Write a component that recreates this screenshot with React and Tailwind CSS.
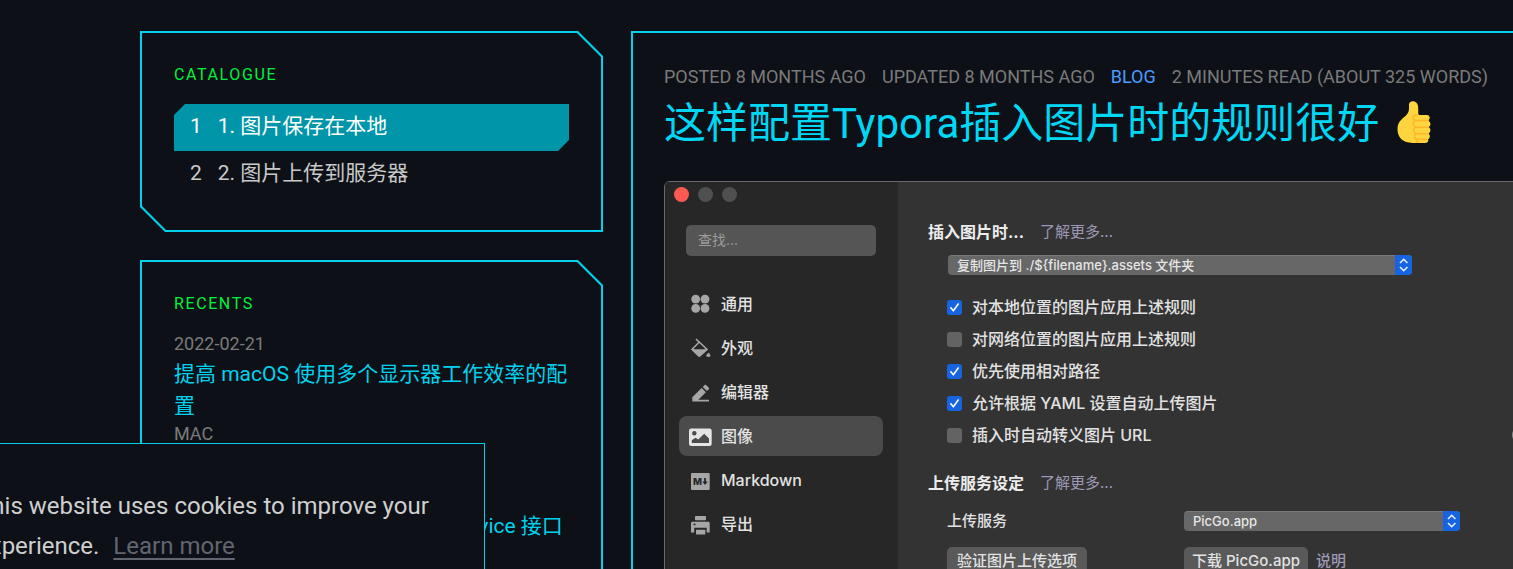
import React from "react";

const SITE_FONT = "font-[Roboto,'Noto_Sans_CJK_SC',sans-serif]";
const APP_FONT = "font-[Inter,'Noto_Sans_CJK_SC',sans-serif]";

function CutCard({ children, className = "" }) {
  return (
    <section
      className={
        "bg-[#00d2ee] p-[2px] [clip-path:polygon(0_0,calc(100%-25px)_0,100%_25px,100%_100%,25px_100%,0_calc(100%-25px))] " +
        className
      }
    >
      <div className="h-full bg-[#0d1117] p-8 [clip-path:polygon(0_0,calc(100%-24px)_0,100%_24px,100%_100%,24px_100%,0_calc(100%-24px))]">
        {children}
      </div>
    </section>
  );
}

function CardLabel({ children }) {
  return (
    <h3 className="text-base leading-5 tracking-widest text-[#00f03c] uppercase">{children}</h3>
  );
}

function Catalogue() {
  return (
    <CutCard>
      <CardLabel>Catalogue</CardLabel>
      <ul className="mt-[19px] text-[21px] leading-8">
        <li>
          <a
            href="#local"
            className="flex h-[47px] gap-4 bg-[#0095a8] px-4 pt-[6px] text-white [clip-path:polygon(11px_0,100%_0,100%_calc(100%-11px),calc(100%-11px)_100%,0_100%,0_11px)]"
          >
            <span>1</span>
            <span>1. 图片保存在本地</span>
          </a>
        </li>
        <li>
          <a href="#server" className="flex h-[47px] gap-4 px-4 pt-[6px] text-[#c9c9c9]">
            <span>2</span>
            <span>2. 图片上传到服务器</span>
          </a>
        </li>
      </ul>
    </CutCard>
  );
}

function RecentPost({ date, category, children }) {
  return (
    <article>
      <p className="text-lg leading-7 text-[#7a7a7a]">{date}</p>
      <h4 className="text-[21px] leading-8 text-[#00d2ee]">
        <a href="#post">{children}</a>
      </h4>
      <p className="text-lg leading-6 text-[#7a7a7a] uppercase">{category}</p>
    </article>
  );
}

function Recents() {
  return (
    <CutCard className="h-[460px]">
      <CardLabel>Recents</CardLabel>
      <div className="mt-4 flex flex-col gap-1">
        <RecentPost date="2022-02-21" category="Mac">
          提高 macOS 使用多个显示器工作效率的配置
        </RecentPost>
        <RecentPost date="2022-02-18" category="Java">
          <span className="block">使用 Spring Boot</span>
          <span className="block whitespace-nowrap">快速开发并且调用 SOAP WebService 接口</span>
        </RecentPost>
      </div>
    </CutCard>
  );
}

function ThumbsUp() {
  return (
    <svg viewBox="0 0 34 42" className="mt-[10px] h-[42px] w-[34px]" role="img" aria-label="thumbs up">
      <path
        fill="#ffd53e"
        d="M12 3.5C12 1.5 13.6.2 15.8.2c3 0 5.4 2.400 5.400 6.300V14H30c3 0 3.600 4 1.200 5.400 2.800 1.600 3 5.200.6 6.600 2.200 1.700 2.200 5.200-.2 6.400 2 1.800 1.400 5-.5 5.900.7 2-.5 3.600-3.100 3.600H15.500C6 41.900.5 36.500.5 28.300c0-7 3.600-9.700 7.100-12.600 2.800-2.300 4.400-4.900 4.400-8z"
      />
      <g fill="none" stroke="#ffb52e" strokeWidth="1.500" strokeLinecap="round">
        <path d="M21.200 13.800c-3.800.2-6 1-5.200 3.600.3 1 1 1.700 2 2-2.600 1.500-2.500 5.500.4 6.700-2.300 1.400-2.200 5.300.6 6.400-2.200 1.500-1.900 5 .6 5.800-.8 1.600 0 2.600 1.600 3" />
        <path d="M18 19.500h13M18.400 26.300h13M19 32.700h12M20 38.400h10" />
      </g>
    </svg>
  );
}

const ICONS = {
  general: (
    <g fill="#a6a6a6">
      <circle cx="7.700" cy="7.200" r="4.400" />
      <circle cx="17" cy="7.200" r="4.400" />
      <circle cx="7.700" cy="16.400" r="4.400" />
      <circle cx="17" cy="16.400" r="4.400" />
    </g>
  ),
  appearance: (
    <g>
      <path d="M8 3l3.500 3.500M11.300 6L4.200 13.200l7.100 6.700 7.500-6.700z" fill="none" stroke="#a6a6a6" strokeWidth="1.600" />
      <path d="M3 13.200h17.300l-8 7.200c-.6.500-1.400.5-2 0z" fill="#a6a6a6" />
      <path d="M20.600 16.500c1 1.400 1.900 2.200 1.900 3.100 0 .8-.6 1.300-1.900 1.300-1.800 0-2.400-.5-2.400-1.300s1.300-1.700 2.400-3.100z" fill="#a6a6a6" />
    </g>
  ),
  editor: (
    <path
      fill="#a6a6a6"
      d="M4.300 21.500v-4.300l9.300-9.300 4.300 4.300-7.500 7.500H21v1.800zM14.700 6.900l1.700-1.700c.6-.6 1.300-.6 1.900 0l2.300 2.300c.6.600.6 1.300 0 1.900L19 11z"
    />
  ),
  image: (
    <g>
      <rect x="1" y="4.500" width="22.700" height="17.500" rx="2.200" fill="#e4e4e4" />
      <circle cx="6.300" cy="9.200" r="2.200" fill="#4b4b4b" />
      <path d="M3.800 19v-2.700l3.800-2.500 2.600 1.600 6-5.600 4.800 4.700V19z" fill="#4b4b4b" />
    </g>
  ),
  markdown: (
    <g>
      <rect x="3" y="5" width="18.700" height="17" rx="1" fill="#a6a6a6" />
      <text x="5" y="17" fontSize="9.500" fontWeight="800" fill="#272727" fontFamily="Inter">M</text>
      <path d="M17 10v4.500" stroke="#272727" strokeWidth="1.800" />
      <path d="M14.300 13.500h5.400L17 17z" fill="#272727" />
    </g>
  ),
  export: (
    <g fill="#a6a6a6">
      <rect x="7" y="4" width="11" height="4.200" rx=".8" />
      <path d="M4.500 9.700h15.700c.9 0 1.500.6 1.500 1.500v9.300h-3v-4.700H6.200v4.700H3v-9.300c0-.9.600-1.500 1.500-1.500z" />
      <rect x="8" y="17.700" width="9.300" height="4.800" rx=".5" />
      <rect x="5.500" y="11.700" width="2" height="1.500" fill="#272727" />
    </g>
  ),
};

const NAV = [
  ["general", "通用"],
  ["appearance", "外观"],
  ["editor", "编辑器"],
  ["image", "图像"],
  ["markdown", "Markdown"],
  ["export", "导出"],
];

function PrefsSidebar() {
  return (
    <aside className="w-[233px] shrink-0 bg-[#272727] pt-[5px] pr-[15px] pl-[14px]">
      <div className="-ml-[5px] flex gap-[9px]">
        <button aria-label="close" className="size-[15px] rounded-full bg-[#ff5a52]" />
        <button aria-label="minimise" className="size-[15px] rounded-full bg-[#505050]" />
        <button aria-label="zoom" className="size-[15px] rounded-full bg-[#505050]" />
      </div>
      <div className="mt-[23px] px-[7px]">
        <input
          aria-label="查找"
          placeholder="查找..."
          className="block h-[31px] w-full rounded-[5px] bg-[#555] px-3 pb-[2px] text-sm placeholder:text-[#9c9c9c]"
        />
      </div>
      <nav className="mt-7 flex flex-col gap-1">
        {NAV.map(([id, label]) => (
          <button
            key={id}
            className={
              "flex h-10 items-center gap-[9px] rounded-lg pl-[9px] text-base font-medium text-[#e2e2e2] " +
              (id === "image" ? "bg-[#4b4b4b]" : "")
            }
          >
            <svg viewBox="0 0 24 24" className="size-6">{ICONS[id]}</svg>
            {label}
          </button>
        ))}
      </nav>
    </aside>
  );
}

function Picker({ label, value, className }) {
  return (
    <div className={"relative h-5 " + className}>
      <select
        aria-label={label}
        className="block h-5 w-full appearance-none rounded-[4px] border-t border-[#7a7a7a] bg-[#676767] pb-[2px] pl-[9px] text-[13px] leading-4 font-medium text-[#e6e6e6]"
      >
        <option>{value}</option>
      </select>
      <svg viewBox="0 0 17 20" className="pointer-events-none absolute top-0 right-0 h-5 w-[17px]">
        <path d="M0 0h13a4 4 0 0 1 4 4v12a4 4 0 0 1-4 4H0z" fill="#1764e0" />
        <path d="M5 8l3.700-3.700L12.400 8M5 12l3.700 3.700 3.700-3.700" fill="none" stroke="#e8effc" strokeWidth="1.600" />
      </svg>
    </div>
  );
}

function Option({ checked, children }) {
  return (
    <label className="flex h-8 items-center text-base font-medium text-[#e2e2e2]">
      <span className="relative mr-[10px] size-[15px]">
        <input
          type="checkbox"
          defaultChecked={checked}
          className="peer block size-[15px] appearance-none rounded-[3px] bg-[#636363] checked:bg-[#1764e0]"
        />
        <svg viewBox="0 0 15 15" className="pointer-events-none absolute inset-0 hidden size-[15px] peer-checked:block">
          <path d="M3.800 7.800l2.600 3 4.800-6.800" fill="none" stroke="#fff" strokeWidth="1.600" strokeLinecap="round" strokeLinejoin="round" />
        </svg>
      </span>
      {children}
    </label>
  );
}

function SectionTitle({ children }) {
  return (
    <div className="flex items-center gap-4 leading-6">
      <h2 className="text-base font-bold text-[#ececec]">{children}</h2>
      <a href="#more" className="text-[15px] text-[#9d98b5]">了解更多...</a>
    </div>
  );
}

function Preferences() {
  return (
    <div className={"mt-6 flex h-[520px] overflow-hidden rounded-md border border-[#6a686c] " + APP_FONT}>
      <PrefsSidebar />
      <div className="grow bg-[#333] pt-[38px] pl-[30px]">
        <SectionTitle>插入图片时...</SectionTitle>
        <div className="pl-[19px]">
          <Picker label="插入图片时" value="复制图片到 ./${filename}.assets 文件夹" className="mt-[11px] ml-px w-[464px]" />
          <div className="mt-4">
            <Option checked>对本地位置的图片应用上述规则</Option>
            <Option>对网络位置的图片应用上述规则</Option>
            <Option checked>优先使用相对路径</Option>
            <Option checked>允许根据 YAML 设置自动上传图片</Option>
            <div className="flex items-center justify-between pr-[15px]">
              <Option>插入时自动转义图片 URL</Option>
              <button aria-label="help" className="size-4 rounded-full bg-[#8a8a8a]" />
            </div>
          </div>
        </div>
        <div className="mt-5">
          <SectionTitle>上传服务设定</SectionTitle>
        </div>
        <div className="mt-4 grid grid-cols-[237px_1fr] items-center gap-y-4 pl-[19px] text-[15px] leading-5 font-medium text-[#e2e2e2]">
          <span>上传服务</span>
          <Picker label="上传服务" value="PicGo.app" className="w-[276px]" />
          <div>
            <button className="h-[27px] rounded-[5px] bg-[#595959] px-[10px]">验证图片上传选项</button>
          </div>
          <div className="flex items-center gap-2">
            <button className="h-[27px] rounded-[5px] bg-[#595959] px-2">下载 PicGo.app</button>
            <a href="#help" className="text-[#9d98b5]">说明</a>
          </div>
        </div>
      </div>
    </div>
  );
}

function CookieBanner() {
  return (
    <div className="fixed bottom-0 -left-8 h-[126px] w-[517px] border border-b-0 border-[#00d2ee] bg-[#0d1117] pt-[42px] pl-2 text-2xl leading-10 text-[#cfcfcf]">
      <p>
        This website uses cookies to improve your
        <br />
        experience.{" "}
        <a href="#cookies" className="ml-2 text-[#62656e] underline decoration-2 underline-offset-4">
          Learn more
        </a>
      </p>
    </div>
  );
}

export default function App() {
  return (
    <div className={"h-screen overflow-hidden bg-[#0d1117] " + SITE_FONT}>
      <main className="flex items-start gap-7 pt-[31px] pl-[140px]">
        <aside className="flex w-[463px] shrink-0 flex-col gap-7">
          <Catalogue />
          <Recents />
        </aside>
        <article className="-mr-16 grow border-2 border-[#00d2ee] px-[31px] pt-[30px] pb-8">
          <div className="flex gap-4 text-lg leading-7 whitespace-nowrap text-[#7a7a7a] uppercase">
            <span>Posted 8 months ago</span>
            <span>Updated 8 months ago</span>
            <a href="#blog" className="text-[#4c9bff]">Blog</a>
            <span>2 minutes read (About 325 words)</span>
          </div>
          <h1 className="flex items-start gap-[18px] text-[42px] leading-[66px] whitespace-nowrap text-[#00d7f5]">
            这样配置Typora插入图片时的规则很好
            <ThumbsUp />
          </h1>
          <Preferences />
        </article>
      </main>
      <CookieBanner />
    </div>
  );
}
